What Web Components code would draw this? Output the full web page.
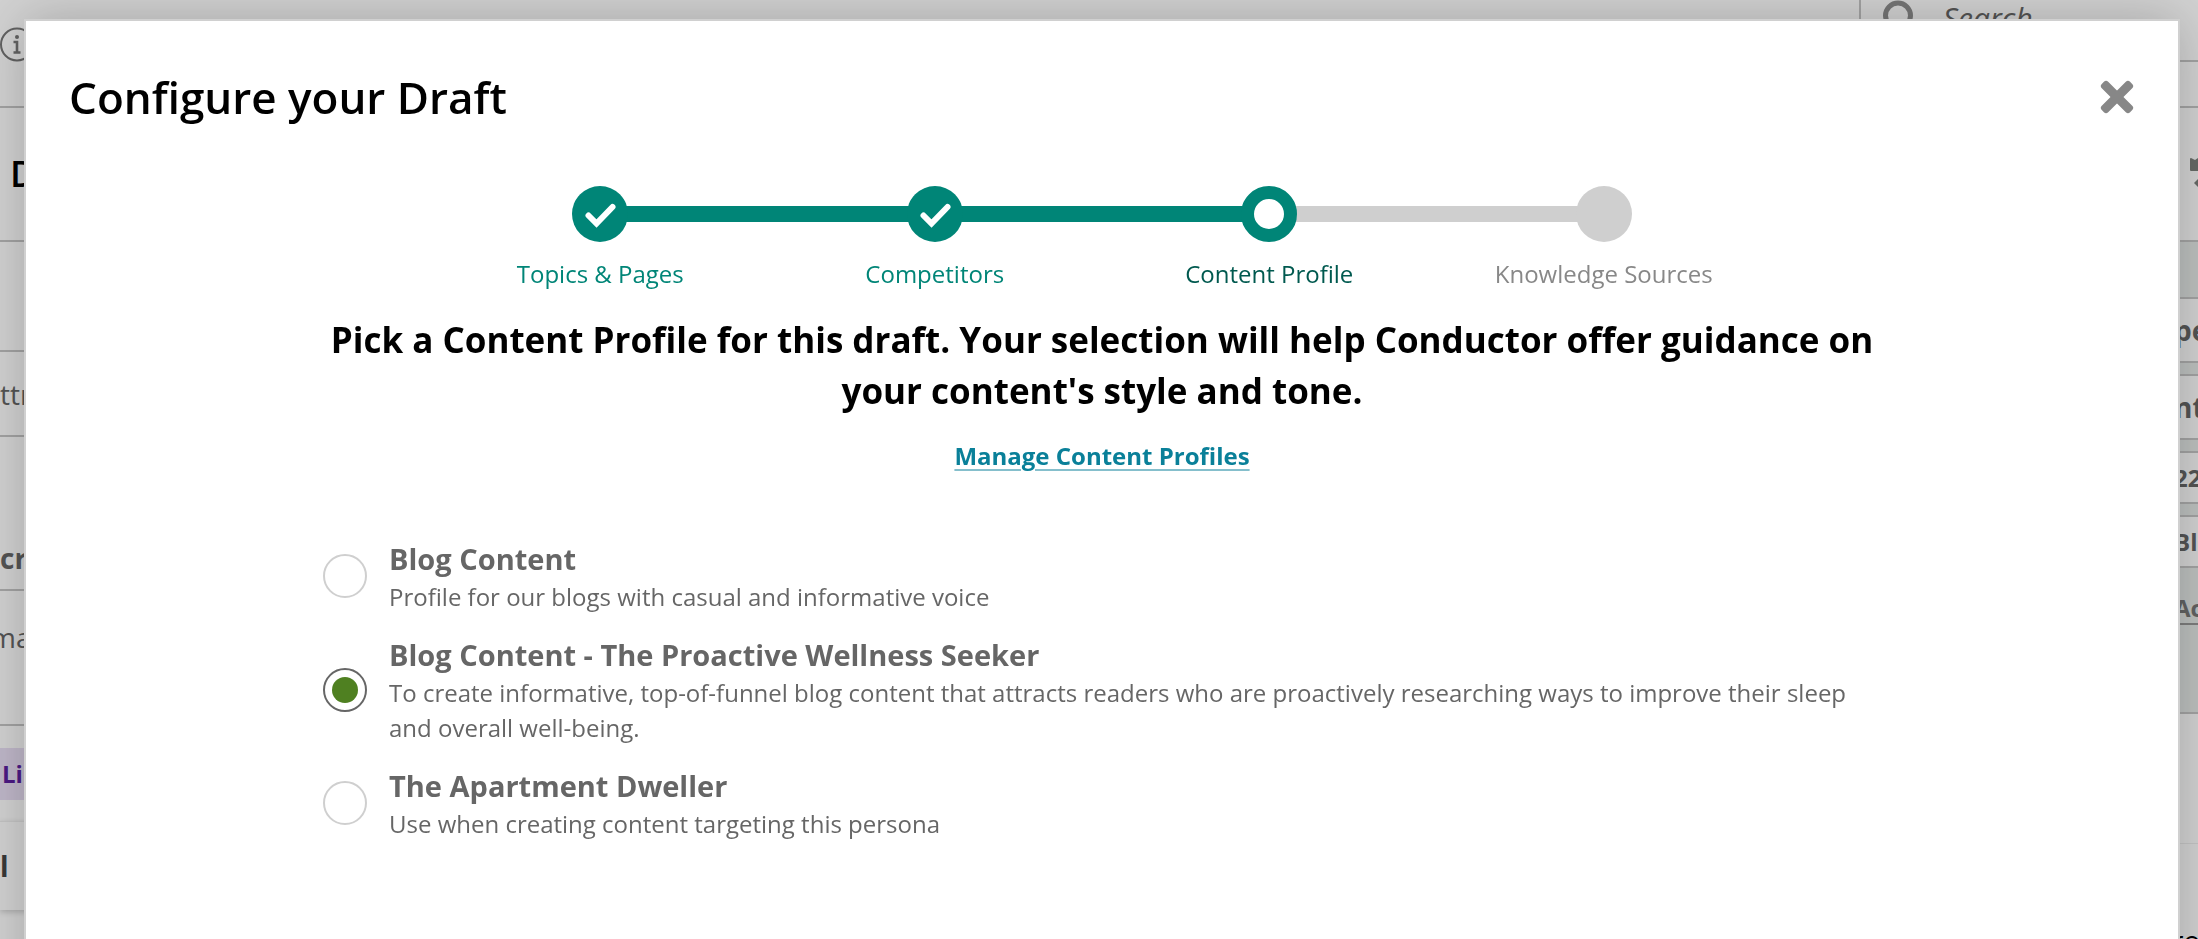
<!DOCTYPE html>
<html lang="en">
<head>
<meta charset="utf-8">
<title>Configure your Draft</title>
<style>
  html, body {
    margin: 0;
    height: 100%;
    overflow: hidden;
    background: #fff;
    font-family: "Open Sans", "Noto Sans", sans-serif;
  }
</style>
</head>
<body>
<draft-page></draft-page>

<draft-modal heading="Configure your Draft">
  <progress-steps>
    <progress-step state="done">Topics &amp; Pages</progress-step>
    <progress-step state="done">Competitors</progress-step>
    <progress-step state="current">Content Profile</progress-step>
    <progress-step state="todo">Knowledge Sources</progress-step>
  </progress-steps>

  <profile-intro link="Manage Content Profiles">Pick a Content Profile for this draft. Your selection will help Conductor offer guidance on your content's style and tone.</profile-intro>

  <profile-list>
    <profile-option name="Blog Content">Profile for our blogs with casual and informative voice</profile-option>
    <profile-option name="Blog Content - The Proactive Wellness Seeker" selected>To create informative, top-of-funnel blog content that attracts readers who are proactively researching ways to improve their sleep and overall well-being.</profile-option>
    <profile-option name="The Apartment Dweller">Use when creating content targeting this persona</profile-option>
  </profile-list>
</draft-modal>

<script>
class BaseElement extends HTMLElement {
  constructor() {
    super();
    this.attachShadow({ mode: 'open' });
  }

  connectedCallback() {
    const template = document.createElement('template');
    template.innerHTML = this.template();
    this.shadowRoot.innerHTML = '';
    this.shadowRoot.appendChild(template.content.cloneNode(true));
    this.setupEventListeners();
  }

  setupEventListeners() {}
}

// The draft editor that stays visible around the dialog
class DraftPage extends BaseElement {
  template() {
    return `
      <style>
        :host {
          --line: #c6c6c6;
          display: flex;
          flex-direction: column;
          height: 100%;
          overflow: hidden;
          color: #666;
          font-size: 28px;
          line-height: 36px;
          white-space: nowrap;
        }

        header, .title-bar {
          display: flex;
          flex: none;
          justify-content: space-between;
          border-bottom: 2px solid var(--line);
        }

        header {
          height: 106px;
        }

        .info {
          display: block;
          margin-top: 27px;
        }

        .search {
          display: flex;
          gap: 22px;
          box-sizing: border-box;
          width: 339px;
          height: 62px;
          padding-left: 22px;
          border-left: 2px solid var(--line);
          border-bottom: 2px solid var(--line);
          font-size: 30px;
          font-style: italic;
        }

        .title-bar {
          align-items: center;
          height: 132px;
          padding-left: 10px;
        }

        h1 {
          margin: 0;
          color: #000;
          font-size: 36px;
          font-weight: 600;
        }

        main {
          flex: 1;
          display: flex;
          justify-content: space-between;
        }

        .content {
          flex: 1;
        }

        .content p, .content h2 {
          box-sizing: border-box;
          margin: 0;
          border-bottom: 2px solid var(--line);
          font-size: 28px;
        }

        .blank { height: 110px; }
        .label { height: 85px; padding-top: 24px; }
        .content h2 { height: 154px; padding-top: 103px; }
        .summary { height: 135px; padding-top: 28px; text-indent: -10px; }

        .tag {
          display: block;
          margin: 22px 0 21px;
          padding-left: 2px;
          background: #e9dff5;
          color: #5b1ea0;
          font-size: 24px;
          font-weight: 700;
          line-height: 52px;
        }

        .card {
          border-top: 1px solid #eee;
          box-shadow: 0 2px 6px rgba(0, 0, 0, 0.2);
          color: #444;
          font-weight: 700;
          line-height: 88px;
        }

        aside {
          width: 40px;
        }

        .settings {
          display: flex;
          flex-direction: column;
          gap: 11px;
          padding: 55px 0 87px;
          border-bottom: 2px solid var(--line);
          background: #e6eae8;
          font-weight: 700;
        }

        .settings span, .settings a {
          padding-left: 16px;
        }

        .settings span {
          border: solid var(--line);
          border-width: 2px 0;
          background: #fff;
          line-height: 62px;
        }

        .settings .short {
          font-size: 24px;
          line-height: 49px;
        }

        .settings a {
          margin-top: 14px;
          border-bottom: 2px solid #999;
          color: #777;
          font-size: 24px;
          line-height: 30px;
          text-decoration: none;
        }

        .more {
          margin-top: 129px;
          border-top: 1px solid #eee;
          padding: 78px 0 0 14px;
          color: #000;
        }
      </style>
      <header>
        <svg class="info" width="35" height="35" viewBox="0 0 35 35" fill="none" stroke="#777" stroke-width="2">
          <circle cx="17" cy="17.500" r="16"/>
          <circle cx="17" cy="10" r="2" fill="#777" stroke="none"/>
          <path d="M13.500 15H17v10M13.500 25.500h7" stroke-width="2.600"/>
        </svg>
        <div class="search">
          <svg width="38" height="38" viewBox="0 0 38 38" fill="none" stroke="#8f8f8f" stroke-width="5">
            <circle cx="15" cy="15.500" r="12.500"/>
            <path d="M25 25l10 10"/>
          </svg>
          <span>Search</span>
        </div>
      </header>
      <div class="title-bar">
        <h1>D</h1>
        <svg width="8" height="34" viewBox="0 0 8 34" fill="#7c807c">
          <path d="M0 2q0-1 1-1l4 2 3-2v13H1q-1 0-1-1zM8 22l-4 4 4 4z"/>
        </svg>
      </div>
      <main>
        <div class="content">
          <p class="blank"></p>
          <p class="label">ttr</p>
          <h2>cr</h2>
          <p class="summary">ma</p>
          <span class="tag">Li</span>
          <div class="card">l</div>
        </div>
        <aside>
          <div class="settings">
            <span>pe</span>
            <span>nt</span>
            <span class="short">22</span>
            <span class="short">Bl</span>
            <a href="#">Ac</a>
          </div>
          <div class="more">ro</div>
        </aside>
      </main>
    `;
  }
}

class DraftModal extends BaseElement {
  template() {
    return `
      <style>
        :host {
          position: fixed;
          inset: 0;
          background: rgba(0, 0, 0, 0.18);
        }

        /* the dialog runs on past the bottom of the window */
        .dialog {
          box-sizing: border-box;
          min-height: 110vh;
          margin: 19px 18px 0 24px;
          padding: 46px 43px 0;
          border: 2px solid #d0d0d0;
          background: #fff;
          box-shadow: 0 0 50px rgba(0, 0, 0, 0.22);
        }

        header {
          display: flex;
          align-items: center;
          justify-content: space-between;
          margin-bottom: 59px;
        }

        h1 {
          margin: 0;
          color: #000;
          font-size: 44px;
          font-weight: 600;
          line-height: 60px;
        }

        button {
          display: flex;
          padding: 0;
          border: 0;
          background: none;
          cursor: pointer;
        }
      </style>
      <section class="dialog" role="dialog" aria-labelledby="heading">
        <header>
          <h1 id="heading">${this.getAttribute('heading')}</h1>
          <button type="button" aria-label="Close">
            <svg width="36" height="36" viewBox="0 0 36 36" fill="#878787">
              <rect x="-2" y="13.500" width="40" height="9" rx="3" transform="rotate(45 18 18)"/>
              <rect x="-2" y="13.500" width="40" height="9" rx="3" transform="rotate(-45 18 18)"/>
            </svg>
          </button>
        </header>
        <slot></slot>
      </section>
    `;
  }

  setupEventListeners() {
    this.shadowRoot.querySelector('button').addEventListener('click', () => {
      this.remove();
    });
  }
}

class ProgressSteps extends BaseElement {
  template() {
    return `
      <style>
        :host {
          display: flex;
          max-width: 1338px;
          margin: 0 auto;
        }

        ::slotted(*) {
          flex: 1;
        }

        ::slotted(:first-child) { --before: transparent; }
        ::slotted(:last-child) { --after: transparent; }
      </style>
      <slot></slot>
    `;
  }
}

class ProgressStep extends BaseElement {
  icon() {
    if (this.getAttribute('state') !== 'done') return '';
    return `
      <svg width="32" height="28" viewBox="0 0 32 28" fill="none" stroke="#fff" stroke-width="6">
        <path d="M4.500 15.500l8 8 16-16.500" stroke-linecap="round"/>
      </svg>
    `;
  }

  template() {
    return `
      <style>
        :host {
          --color: #008577;
          display: grid;
          grid-template-columns: 1fr 28px 28px 1fr;
          align-items: center;
          row-gap: 14px;
          text-align: center;
        }

        :host([state="todo"]) { --color: #cfcfcf; }

        .before, .after {
          grid-row: 1;
          height: 16px;
        }

        .before {
          grid-column: 1 / 3;
          background: var(--before, var(--color));
        }

        .after {
          grid-column: 3 / 5;
          background: var(--after, var(--color));
        }

        :host([state="current"]) .after { background: #cfcfcf; }

        .dot {
          grid-row: 1;
          grid-column: 2 / 4;
          display: flex;
          align-items: center;
          justify-content: center;
          box-sizing: border-box;
          height: 56px;
          border-radius: 50%;
          background: var(--color);
        }

        :host([state="current"]) .dot {
          border: 13px solid var(--color);
          background: #fff;
        }

        .label {
          grid-column: 1 / -1;
          color: var(--color);
          font-size: 24px;
          line-height: 36px;
        }

        :host([state="current"]) .label { color: #00594f; }
        :host([state="todo"]) .label { color: #888; }
      </style>
      <span class="before"></span>
      <span class="after"></span>
      <span class="dot">${this.icon()}</span>
      <span class="label"><slot></slot></span>
    `;
  }
}

class ProfileIntro extends BaseElement {
  template() {
    return `
      <style>
        :host {
          display: block;
          max-width: 1558px;
          margin: 22px auto 64px;
          text-align: center;
        }

        h2 {
          margin: 0 0 22px;
          color: #000;
          font-size: 35px;
          font-weight: 700;
          line-height: 51px;
        }

        a {
          color: #0a8099;
          font-size: 24px;
          font-weight: 700;
          line-height: 36px;
          text-decoration: underline 2px #85bfcc;
          text-underline-offset: 4px;
        }
      </style>
      <h2><slot></slot></h2>
      <a href="#">${this.getAttribute('link')}</a>
    `;
  }
}

class ProfileList extends BaseElement {
  template() {
    return `
      <style>
        :host {
          display: flex;
          flex-direction: column;
          gap: 20px;
          max-width: 1558px;
          margin: 0 auto;
        }
      </style>
      <slot></slot>
    `;
  }

  setupEventListeners() {
    this.addEventListener('profile-selected', (event) => {
      this.querySelectorAll('profile-option').forEach((option) => {
        if (option !== event.target) option.clear();
      });
    });
  }
}

class ProfileOption extends BaseElement {
  template() {
    return `
      <style>
        :host {
          display: block;
        }

        label {
          display: flex;
          align-items: center;
          gap: 22px;
          color: #666;
          cursor: pointer;
        }

        input {
          appearance: none;
          display: grid;
          place-items: center;
          flex: none;
          box-sizing: border-box;
          width: 44px;
          height: 44px;
          margin: 0;
          border: 2px solid #cfcfcf;
          border-radius: 50%;
          background: #fff;
        }

        input:checked {
          border-color: #666;
        }

        input:checked::before {
          content: "";
          width: 26px;
          height: 26px;
          border-radius: 50%;
          background: #4f8021;
        }

        .text {
          display: flex;
          flex-direction: column;
          font-size: 24px;
          line-height: 35px;
        }

        strong {
          font-size: 29px;
          font-weight: 700;
          line-height: 41px;
        }
      </style>
      <label>
        <input type="radio" name="profile"${this.hasAttribute('selected') ? ' checked' : ''}>
        <span class="text">
          <strong>${this.getAttribute('name')}</strong>
          <span><slot></slot></span>
        </span>
      </label>
    `;
  }

  setupEventListeners() {
    this.shadowRoot.querySelector('input').addEventListener('change', () => {
      this.dispatchEvent(new CustomEvent('profile-selected', { bubbles: true }));
    });
  }

  clear() {
    this.shadowRoot.querySelector('input').checked = false;
  }
}

customElements.define('draft-page', DraftPage);
customElements.define('draft-modal', DraftModal);
customElements.define('progress-steps', ProgressSteps);
customElements.define('progress-step', ProgressStep);
customElements.define('profile-intro', ProfileIntro);
customElements.define('profile-list', ProfileList);
customElements.define('profile-option', ProfileOption);
</script>
</body>
</html>
